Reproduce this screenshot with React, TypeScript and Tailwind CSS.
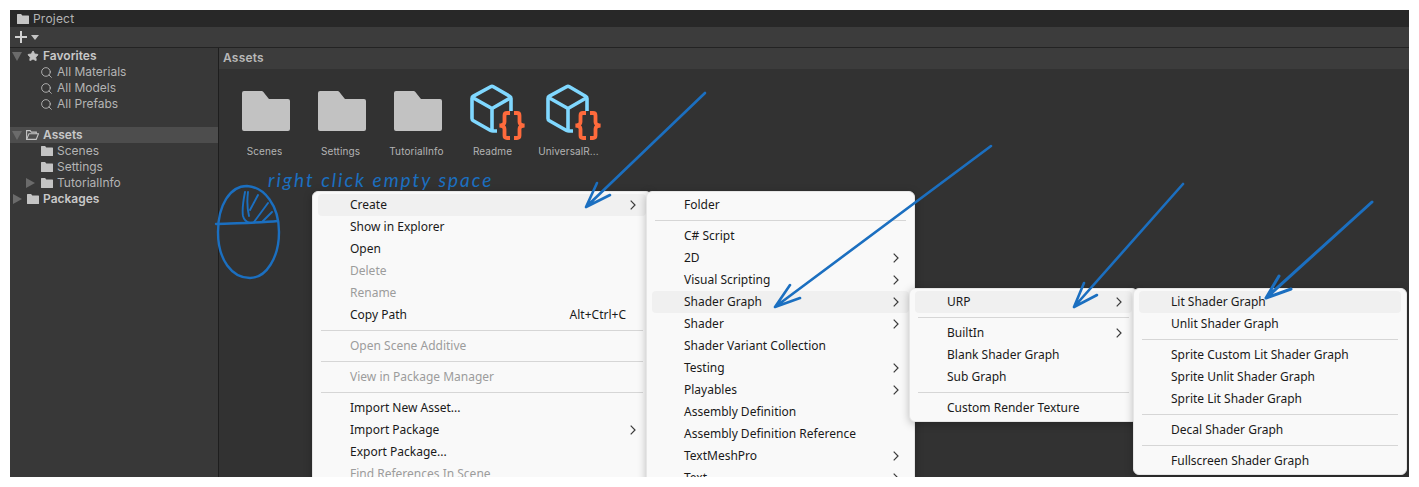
import { Search, Star } from "lucide-react";

type MenuRow =
  | { sep: true }
  | {
      sep?: false;
      label: string;
      arrow?: boolean;
      disabled?: boolean;
      active?: boolean;
      shortcut?: string;
    };

const mainMenu: MenuRow[] = [
  { label: "Create", arrow: true, active: true },
  { label: "Show in Explorer" },
  { label: "Open" },
  { label: "Delete", disabled: true },
  { label: "Rename", disabled: true },
  { label: "Copy Path", shortcut: "Alt+Ctrl+C" },
  { sep: true },
  { label: "Open Scene Additive", disabled: true },
  { sep: true },
  { label: "View in Package Manager", disabled: true },
  { sep: true },
  { label: "Import New Asset..." },
  { label: "Import Package", arrow: true },
  { label: "Export Package..." },
  { label: "Find References In Scene", disabled: true },
];

const createMenu: MenuRow[] = [
  { label: "Folder" },
  { sep: true },
  { label: "C# Script" },
  { label: "2D", arrow: true },
  { label: "Visual Scripting", arrow: true },
  { label: "Shader Graph", arrow: true, active: true },
  { label: "Shader", arrow: true },
  { label: "Shader Variant Collection" },
  { label: "Testing", arrow: true },
  { label: "Playables", arrow: true },
  { label: "Assembly Definition" },
  { label: "Assembly Definition Reference" },
  { label: "TextMeshPro", arrow: true },
  { label: "Text", arrow: true },
];

const shaderGraphMenu: MenuRow[] = [
  { label: "URP", arrow: true, active: true },
  { sep: true },
  { label: "BuiltIn", arrow: true },
  { label: "Blank Shader Graph" },
  { label: "Sub Graph" },
  { sep: true },
  { label: "Custom Render Texture" },
];

const urpMenu: MenuRow[] = [
  { label: "Lit Shader Graph", active: true },
  { label: "Unlit Shader Graph" },
  { sep: true },
  { label: "Sprite Custom Lit Shader Graph" },
  { label: "Sprite Unlit Shader Graph" },
  { label: "Sprite Lit Shader Graph" },
  { sep: true },
  { label: "Decal Shader Graph" },
  { sep: true },
  { label: "Fullscreen Shader Graph" },
];

const FolderIcon = ({ className }: { className: string }) => (
  <svg viewBox="0 0 48 40" className={className} fill="currentColor">
    <path d="M2 0h17.5c.8 0 1.4.3 1.9 1L26.500 7.500c.4.4.9.5 1.500.5H46a2 2 0 0 1 2 2v28a2 2 0 0 1-2 2H2a2 2 0 0 1-2-2V2a2 2 0 0 1 2-2z" />
  </svg>
);

const SmallFolder = () => (
  <svg viewBox="0 0 12 10" className="h-[10px] w-[12px] text-[#c4c4c4]" fill="currentColor">
    <path d="M0 .6C0 .2.2 0 .6 0h3.500L5.300 1.500h6.100c.4 0 .6.2.6.6v7.300c0 .4-.2.6-.6.6H.6C.2 10 0 9.800 0 9.400z" />
  </svg>
);

const OpenFolder = () => (
  <svg viewBox="0 0 13 10" className="h-[10px] w-[13px] text-[#c4c4c4]" fill="none" stroke="currentColor" strokeWidth="1.100">
    <path d="M.6 9.400V.6h3.500l1.200 1.500h5v1.600" />
    <path d="M.6 9.400h9.600l2.300-5.700H3z" />
  </svg>
);

const TriangleDown = () => (
  <svg viewBox="0 0 10 9" className="h-[9px] w-[10px] text-[#6b6b6b]" fill="currentColor">
    <path d="M0 0h10L5 9z" />
  </svg>
);

const TriangleRight = () => (
  <svg viewBox="0 0 9 10" className="h-[10px] w-[9px] text-[#6b6b6b]" fill="currentColor">
    <path d="M0 0l9 5-9 5z" />
  </svg>
);

const TreeRow = ({
  depth = 0,
  expand,
  icon,
  label,
  bold,
  selected,
}: {
  depth?: 0 | 1;
  expand?: "down" | "right";
  icon: React.ReactNode;
  label: string;
  bold?: boolean;
  selected?: boolean;
}) => (
  <div className={`flex h-4 items-center ${selected ? "bg-[#4d4d4d]" : ""}`}>
    <div className={`mr-[2px] flex shrink-0 items-center justify-center ${depth === 1 ? "ml-[12px] w-[16px]" : "w-[14px]"}`}>
      {expand === "down" && <TriangleDown />}
      {expand === "right" && <TriangleRight />}
    </div>
    <div className="flex w-[13px] shrink-0 items-center justify-center">{icon}</div>
    <span className={`ml-[4px] text-[12px] leading-4 ${bold ? "font-semibold text-[#c8c8c8]" : "text-[#b4b4b4]"}`}>{label}</span>
  </div>
);

const SearchRow = ({ label }: { label: string }) => (
  <TreeRow depth={1} icon={<Search className="h-[13px] w-[13px] text-[#c4c4c4]" strokeWidth={1.500} />} label={label} />
);

const AssetTile = ({ label, script }: { label: string; script?: boolean }) => (
  <div className="flex w-[76px] shrink-0 flex-col items-center">
    <div className="flex h-[56px] w-[76px] items-center">
      {script ? (
        <svg viewBox="0 0 56 56" className="ml-[14px] h-[56px] w-[56px]" fill="none">
          <path
            d="M41 27V14.500c0-1-.5-1.800-1.400-2.300L23.400 2.800c-.9-.5-1.900-.5-2.800 0L3.400 12.200c-.9.500-1.400 1.300-1.400 2.300v20c0 1 .5 1.800 1.400 2.300L20.600 46.500c.8.400 1.500.5 2.400.5h4"
            stroke="#80d8ff"
            strokeWidth="3.600"
            strokeLinejoin="round"
          />
          <path d="M2.500 13.500 22 24.500 41 13.500M22 24.500V47" stroke="#80d8ff" strokeWidth="3.600" />
          <path
            d="M40 29h-3c-1.500 0-2.500 1-2.500 2.500v6.500c0 2-1.500 3.300-5 3.500 3.500.2 5 1.500 5 3.500v6.500c0 1.500 1 2.500 2.500 2.500h3M44 29h3c1.500 0 2.500 1 2.500 2.500v6.500c0 2 1.500 3.300 5 3.500-3.500.2-5 1.500-5 3.500v6.500c0 1.500-1 2.500-2.500 2.500h-3"
            stroke="#ff6a3c"
            strokeWidth="3.800"
          />
        </svg>
      ) : (
        <FolderIcon className="ml-[14px] mt-[-2px] h-[40px] w-[48px] text-[#c2c2c2]" />
      )}
    </div>
    <span className="mt-[3px] mr-[3px] max-w-[76px] truncate text-[10px] leading-4 tracking-[0.1px] text-[#b4b4b4]">{label}</span>
  </div>
);

const Chevron = () => (
  <svg viewBox="0 0 6 10" className="h-[10px] w-[6px] text-[#3a3a3a]" fill="none" stroke="currentColor" strokeWidth="1.200">
    <path d="M.7.7 5 5 .7 9.300" />
  </svg>
);

const Menu = ({ rows, className }: { rows: MenuRow[]; className: string }) => (
  <div className={`absolute rounded-[6px] border border-[#e6e6e6] bg-[#f9f9f9] pt-[2px] pb-[2px] shadow-[0_2px_8px_rgba(0,0,0,0.25)] ${className}`}>
    {rows.map((row, i) =>
      row.sep ? (
        <div key={i} className="mx-2 my-1 h-px bg-[#d6d6d6]" />
      ) : (
        <div
          key={i}
          className={`mx-[5px] flex h-[22px] items-center rounded-[4px] pl-[32px] pr-[10px] ${row.active ? "bg-[#f0f0f0]" : ""}`}
        >
          <span
            className={`flex-1 font-['Noto_Sans',sans-serif] text-[12px] leading-[22px] whitespace-nowrap ${row.disabled ? "text-[#9c9c9c]" : "text-[#1a1a1a]"}`}
          >
            {row.label}
          </span>
          {row.shortcut && (
            <span className="mr-[10px] font-['Noto_Sans',sans-serif] text-[12px] text-[#1a1a1a]">{row.shortcut}</span>
          )}
          {row.arrow && <Chevron />}
        </div>
      ),
    )}
  </div>
);

const Sketches = () => (
  <svg
    viewBox="10 10 1399 467"
    className="pointer-events-none absolute inset-0 h-full w-full"
    fill="none"
    stroke="#1b6fc0"
    strokeWidth="2.600"
    strokeLinecap="round"
    strokeLinejoin="round"
  >
    {/* mouse */}
    <path d="M247 186C230 186 218 205 218 232C218 260 232 278 250 278C266 278 279 258 279 232C279 205 264 187 247 186z" strokeWidth="2.400" />
    <path d="M216 224c20-1 42-1 62-3" strokeWidth="2.400" />
    <path d="M245 192c-2 10-3 18-2 24 1 4 3 6 7 7M248 192c-1 8-1 16 1 24M258 195l-8 15M268 203l-14 19M272 212l-10 10" strokeWidth="1.900" />
    {/* arrows */}
    <path d="M705 93 586 207M597 183l-11 24 24-12" />
    <path d="M991 146 775 307M790 285l-15 22 25-9" />
    <path d="M1183 184 1074 307M1084 283l-10 24 23-12" />
    <path d="M1372 202 1266 298M1279 276l-13 22 25-9" strokeWidth="3" />
  </svg>
);

export default function App() {
  return (
    <div className="h-[487px] w-[1419px] overflow-hidden bg-white pt-[10px] pl-[10px] font-['Inter',sans-serif]">
      <div className="relative flex h-[467px] w-[1399px] flex-col overflow-hidden bg-[#323232]">
        <div className="flex h-[17px] shrink-0 items-center gap-[4px] bg-[#282828] pl-[7px]">
          <SmallFolder />
          <span className="text-[12px] tracking-[0.2px] text-[#b4b4b4]">Project</span>
        </div>
        <div className="flex h-[21px] shrink-0 items-center border-b border-[#232323] bg-[#3c3c3c] pl-[5px]">
          <svg viewBox="0 0 12 12" className="h-[12px] w-[12px] text-[#d2d2d2]" fill="currentColor">
            <path d="M5 0h2v5h5v2H7v5H5V7H0V5h5z" />
          </svg>
          <svg viewBox="0 0 8 5" className="ml-[4px] h-[5px] w-[8px] text-[#c4c4c4]" fill="currentColor">
            <path d="M0 0h8L4 5z" />
          </svg>
        </div>

        <div className="flex min-h-0 flex-1">
          <aside className="w-[209px] shrink-0 border-r border-[#1e1e1e] bg-[#383838]">
            <TreeRow expand="down" icon={<Star className="h-[12px] w-[12px] text-[#c4c4c4]" fill="currentColor" />} label="Favorites" bold />
            <SearchRow label="All Materials" />
            <SearchRow label="All Models" />
            <SearchRow label="All Prefabs" />
            <div className="h-[15px]" />
            <TreeRow expand="down" icon={<OpenFolder />} label="Assets" bold selected />
            <TreeRow depth={1} icon={<SmallFolder />} label="Scenes" />
            <TreeRow depth={1} icon={<SmallFolder />} label="Settings" />
            <TreeRow depth={1} expand="right" icon={<SmallFolder />} label="TutorialInfo" />
            <TreeRow expand="right" icon={<SmallFolder />} label="Packages" bold />
          </aside>

          <main className="min-w-0 flex-1">
            <div className="flex h-[21px] items-center bg-[#3c3c3c] pb-[2px] pl-[4px] text-[12px] font-semibold tracking-[0.2px] text-[#b8b8b8]">
              Assets
            </div>
            <div className="flex pt-[15px] pl-[9px]">
              <AssetTile label="Scenes" />
              <AssetTile label="Settings" />
              <AssetTile label="TutorialInfo" />
              <AssetTile label="Readme" script />
              <AssetTile label="UniversalR..." script />
            </div>
          </main>
        </div>

        <Menu rows={mainMenu} className="top-[181px] left-[302px] w-[340px]" />
        <Menu rows={createMenu} className="top-[181px] left-[636px] w-[269px]" />
        <Menu rows={shaderGraphMenu} className="top-[278px] left-[899px] w-[229px]" />
        <Menu rows={urpMenu} className="top-[278px] left-[1123px] w-[274px]" />

        <Sketches />
        <span className="pointer-events-none absolute top-[158px] left-[258px] font-['Lato',sans-serif] text-[19px] leading-6 tracking-[2px] whitespace-nowrap text-[#1b6fc0] italic">
          right click empty space
        </span>
      </div>
    </div>
  );
}
